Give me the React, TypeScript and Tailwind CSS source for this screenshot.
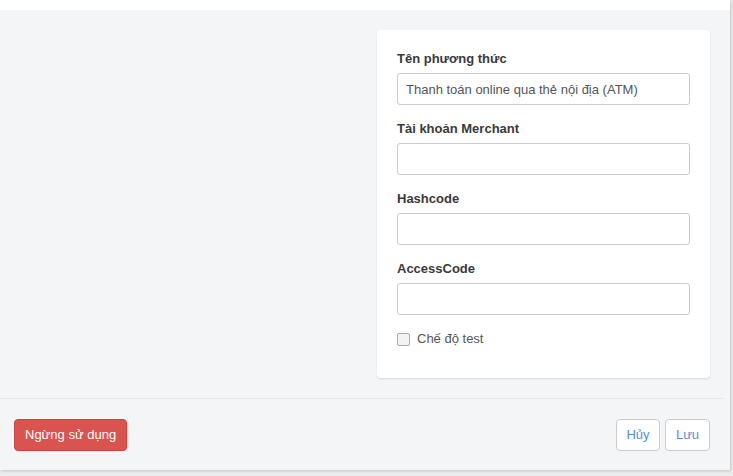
const fields = [
  { label: "Tên phương thức", value: "Thanh toán online qua thẻ nội địa (ATM)" },
  { label: "Tài khoản Merchant", value: "" },
  { label: "Hashcode", value: "" },
  { label: "AccessCode", value: "" },
];

export default function App() {
  return (
    <div className="h-[476px] w-[733px] overflow-hidden bg-[#ececec] font-['Liberation_Sans',Arial,sans-serif] text-[13px] text-[#333]">
      <div className="flex h-[470px] w-[730px] flex-col bg-[#f4f5f7] shadow-[1px_1px_3px_rgba(0,0,0,0.18)]">
        <div className="h-[10px] bg-white" />
        <div className="flex justify-end pr-[20px] pt-[20px] pb-[20px]">
          <div className="w-[333px] rounded-[4px] bg-white px-[20px] pt-[20px] pb-[30px] shadow-[0_1px_2px_rgba(0,0,0,0.12)]">
            {fields.map((f) => (
              <div key={f.label} className="mb-[15px]">
                <label className="mb-[5px] block text-[13px] leading-[18px] font-bold text-[#3a3a3a]">
                  {f.label}
                </label>
                <input
                  readOnly
                  defaultValue={f.value}
                  className="block h-[32px] w-full rounded-[3px] border border-[#ccc] bg-white px-[8px] text-[13px] text-[#555] outline-none"
                />
              </div>
            ))}
            <label className="flex h-[18px] items-center gap-[7px] text-[13px] text-[#555]">
              <span className="h-[13px] w-[13px] rounded-[2px] border border-[#aaa] bg-[#f3f3f3]" />
              Chế độ test
            </label>
          </div>
        </div>
        <div className="mr-[6px] flex flex-1 items-start justify-between border-t border-[#e6e8eb] px-[14px] pt-[20px]">
          <button className="h-[32px] rounded-[4px] border border-[#d43f3a] bg-[#d9534f] px-[10px] text-[13px] text-white">
            Ngừng sử dụng
          </button>
          <div className="flex gap-[5px]">
            <button className="h-[32px] w-[44px] rounded-[4px] border border-[#ccc] bg-white text-[13px] text-[#4f94d4]">
              Hủy
            </button>
            <button className="h-[32px] w-[45px] rounded-[4px] border border-[#ccc] bg-white text-[13px] text-[#4f94d4]">
              Lưu
            </button>
          </div>
        </div>
      </div>
    </div>
  );
}
